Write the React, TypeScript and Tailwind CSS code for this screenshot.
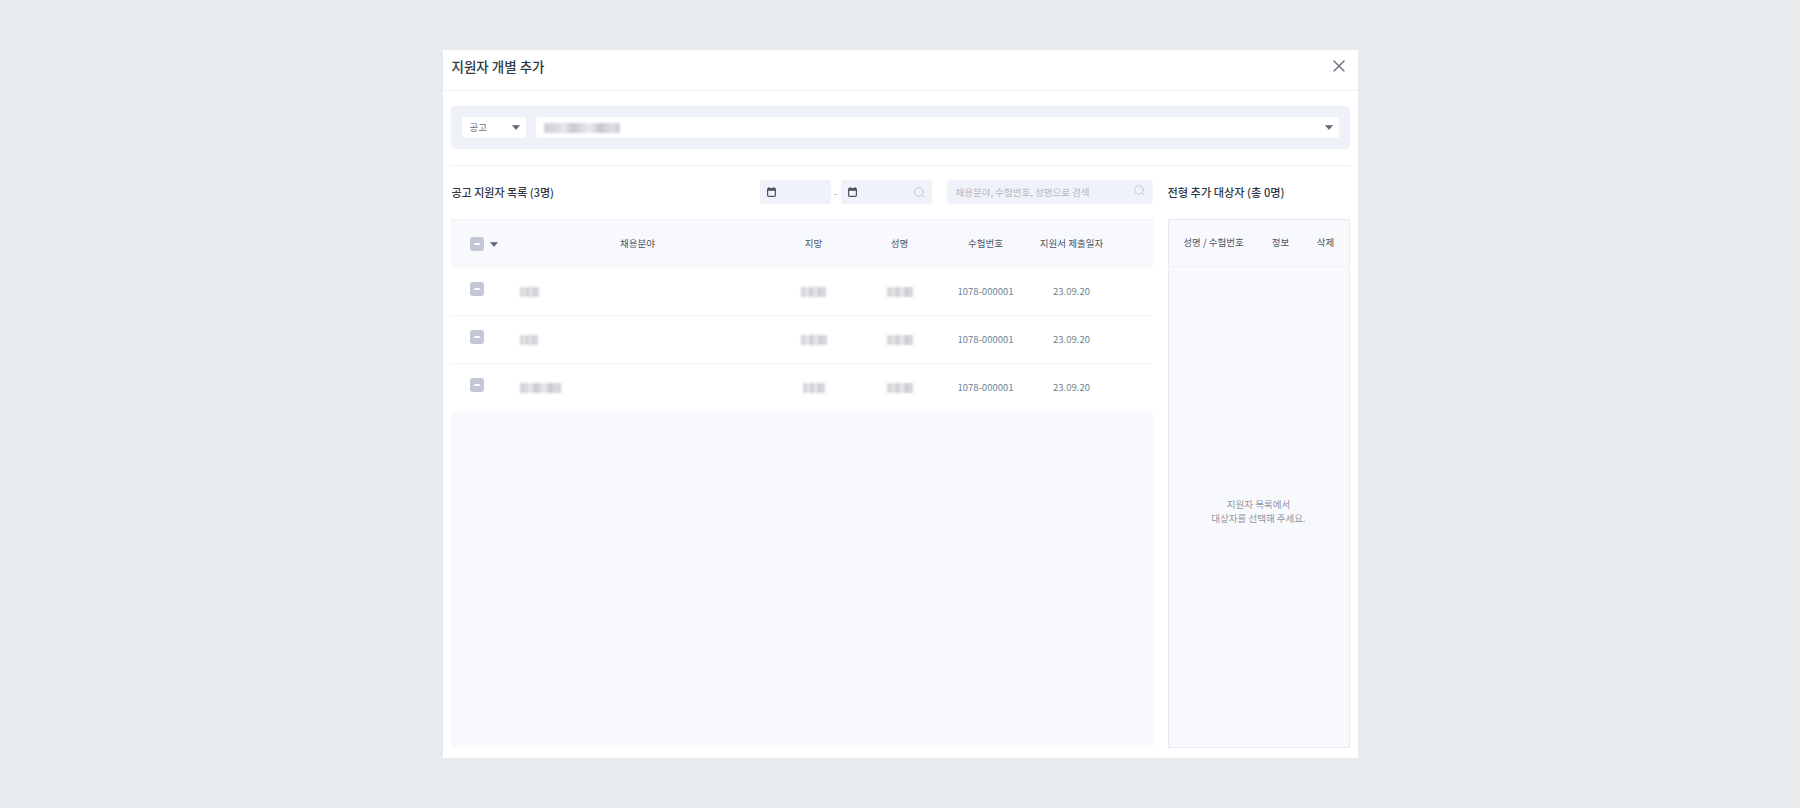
import { Search, X } from 'lucide-react'

const rowCols = 'grid grid-cols-[59px_256px_96px_76px_96px_76px_43px] items-center'

const rows = [
  { field: 'w-[19px]', wish: 'w-[25px]', name: 'w-[26px]', h: 'h-[48px]' },
  { field: 'w-[18px]', wish: 'w-[26px]', name: 'w-[26px]', h: 'h-[48px]' },
  { field: 'w-[41px]', wish: 'w-[22px]', name: 'w-[26px]', h: 'h-[47px]' },
]

function Caret() {
  return (
    <svg width="8" height="5" viewBox="0 0 8 5" className="shrink-0">
      <path d="M0.5 0.5h7L4 4.5z" fill="#5d6675" stroke="#5d6675" strokeWidth="0.6" strokeLinejoin="round" />
    </svg>
  )
}

function CheckMinus() {
  return (
    <div className="flex h-[14px] w-[14px] items-center justify-center rounded-[3px] bg-[#c4c7d5]">
      <div className="h-[2px] w-[6px] rounded-full bg-white" />
    </div>
  )
}

function CalendarIcon() {
  return (
    <svg width="9" height="10" viewBox="0 0 9 10" className="shrink-0">
      <path d="M2 0v2M7 0v2" stroke="#4d5666" strokeWidth="1.2" />
      <rect x="0.6" y="1.6" width="7.8" height="7.8" rx="0.8" fill="none" stroke="#4d5666" strokeWidth="1.2" />
      <rect x="0.6" y="1.6" width="7.8" height="2.2" fill="#4d5666" />
    </svg>
  )
}

function Blurred({ className }: { className: string }) {
  return (
    <div
      className={`h-[10px] bg-[linear-gradient(90deg,#d2d4d9_0%,#d9dbdf_18%,#eaebee_26%,#c8cad0_38%,#dfe0e4_52%,#e9eaed_60%,#c6c9cf_74%,#dcdde2_88%,#cfd1d6_100%)] blur-[1.2px] ${className}`}
    />
  )
}

export default function App() {
  return (
    <div className="flex h-[808px] justify-center bg-[#e8ebee] pt-[50px] font-['Noto_Sans_CJK_KR',sans-serif] text-[#4c5462]">
      <div className="flex h-[708px] w-[915px] flex-col bg-white">
        <div className="flex h-[41px] shrink-0 items-center justify-between border-b border-[#eef0f4] pl-2 pr-[9px]">
          <h1 className="mb-[7px] ml-px text-[13.5px] font-medium text-[#2f3845]">지원자 개별 추가</h1>
          <X className="mb-[9px] h-[20px] w-[20px] text-[#6b7380]" strokeWidth={1.6} />
        </div>

        <div className="flex min-h-0 flex-1 flex-col px-2 pb-[10px]">
          <div className="mt-[15px] flex h-[43px] shrink-0 items-center gap-[10px] rounded-[4px] bg-[#eff2f9] px-[11px]">
            <div className="flex h-[21px] w-[64px] items-center justify-between rounded-[3px] bg-white pl-2 pr-[6px]">
              <span className="text-[9.5px] text-[#6b7280]">공고</span>
              <Caret />
            </div>
            <div className="flex h-[21px] flex-1 items-center justify-between rounded-[3px] bg-white pl-2 pr-[6px]">
              <Blurred className="w-[76px]" />
              <Caret />
            </div>
          </div>

          <div className="mt-4 flex min-h-0 flex-1 flex-col border-t border-[#eef0f4]">
            <div className="flex min-h-0 flex-1 gap-[15px] pt-[14px]">
              <div className="flex w-[702px] flex-col">
                <div className="flex h-[24px] items-center">
                  <h2 className="ml-px text-[11px] font-medium text-[#2f3845]">공고 지원자 목록 (3명)</h2>
                  <div className="ml-auto flex items-center">
                    <div className="flex h-[24px] w-[71px] items-center rounded-[4px] bg-[#eff2f9] pl-[7px]">
                      <CalendarIcon />
                    </div>
                    <span className="w-[10px] text-center text-[10px] text-[#9aa0ab]">-</span>
                    <div className="flex h-[24px] w-[91px] items-center justify-between rounded-[4px] bg-[#eff2f9] pl-[7px] pr-[6px]">
                      <CalendarIcon />
                      <Search className="h-[13px] w-[13px] text-[#bfc3cd]" strokeWidth={1.6} />
                    </div>
                  </div>
                  <div className="ml-[15px] flex h-[24px] w-[206px] items-center justify-between rounded-[4px] bg-[#eff2f9] pl-[9px] pr-[7px]">
                    <span className="text-[9.5px] text-[#b4b8c2]">채용분야, 수험번호, 성명으로 검색</span>
                    <Search className="mb-[3px] h-[13px] w-[13px] text-[#bfc3cd]" strokeWidth={1.6} />
                  </div>
                </div>

                <div className="mb-px mt-[15px] flex min-h-0 flex-1 flex-col border-t border-[#eef0f5] bg-[#f8f9fd] text-[9.5px]">
                  <div className={`${rowCols} h-[48px] text-center`}>
                    <div className="flex items-center gap-[6px] pl-[19px]">
                      <CheckMinus />
                      <Caret />
                    </div>
                    <span className="mb-px">채용분야</span>
                    <span className="mb-px">지망</span>
                    <span className="mb-px">성명</span>
                    <span className="mb-px">수험번호</span>
                    <span className="mb-px">지원서 제출일자</span>
                    <span />
                  </div>
                  {rows.map((row, i) => (
                    <div key={i} className={`${rowCols} ${row.h} border-b border-[#f3f4f8] bg-white text-center text-[#6d7f92] last:border-b-0`}>
                      <div className="mb-[6px] pl-[19px]">
                        <CheckMinus />
                      </div>
                      <Blurred className={`ml-[10px] ${row.field}`} />
                      <Blurred className={`mx-auto ${row.wish}`} />
                      <Blurred className={`mx-auto ${row.name}`} />
                      <span>1078-000001</span>
                      <span>23.09.20</span>
                      <span />
                    </div>
                  ))}
                </div>
              </div>

              <div className="flex flex-1 flex-col">
                <div className="flex h-[24px] items-center">
                  <h2 className="text-[11.2px] font-medium text-[#2f3845]">전형 추가 대상자 (총 0명)</h2>
                </div>
                <div className="mt-[15px] flex min-h-0 flex-1 flex-col border border-[#e9ebf2] bg-[#f8f9fd] text-[9.5px]">
                  <div className="grid h-[47px] shrink-0 grid-cols-[90px_44px_1fr] items-center border-b border-[#eef0f5] text-center">
                    <span className="mb-px">성명 / 수험번호</span>
                    <span className="mb-px">정보</span>
                    <span className="mb-px">삭제</span>
                  </div>
                  <div className="flex flex-1 items-center justify-center pt-2 text-center leading-[14px] text-[#8f95a1]">
                    <p>
                      지원자 목록에서
                      <br />
                      대상자를 선택해 주세요.
                    </p>
                  </div>
                </div>
              </div>
            </div>
          </div>
        </div>
      </div>
    </div>
  )
}
